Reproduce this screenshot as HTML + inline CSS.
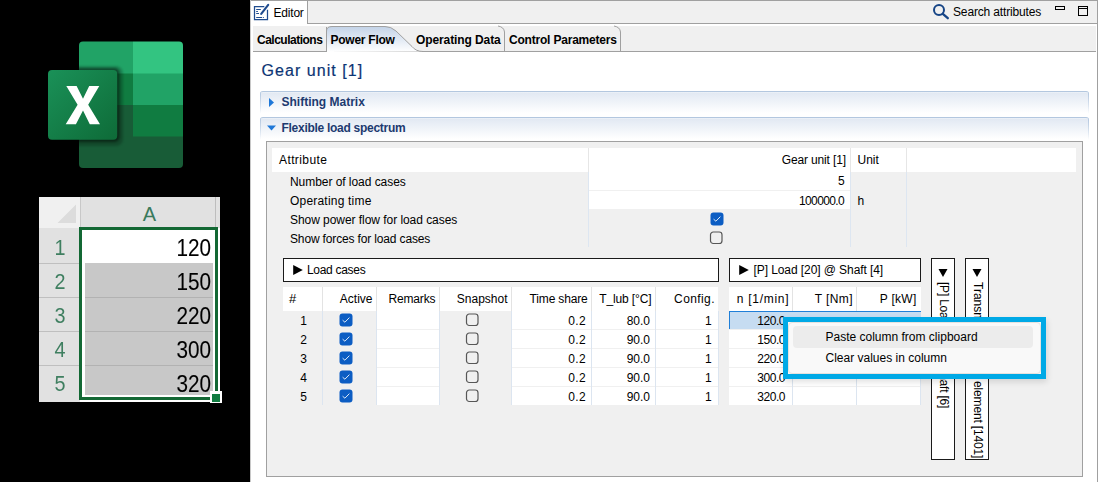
<!DOCTYPE html>
<html><head><meta charset="utf-8"><style>
html,body{margin:0;padding:0;background:#000;width:1099px;height:482px;overflow:hidden;position:relative;font-family:"Liberation Sans", sans-serif;}
div{position:absolute;}
.t{white-space:nowrap;}
</style></head><body>
<svg style="position:absolute;left:0;top:0" width="250" height="482" viewBox="0 0 250 482">
<defs>
<clipPath id="sheet"><rect x="79" y="41.5" width="104" height="126.5" rx="4"/></clipPath>
<linearGradient id="xg" x1="0" y1="0" x2="1" y2="1"><stop offset="0" stop-color="#1a9158"/><stop offset="1" stop-color="#0e6b38"/></linearGradient>
<filter id="sh1" x="-20%" y="-20%" width="150%" height="150%"><feGaussianBlur stdDeviation="0.9"/></filter><filter id="sh2" x="-20%" y="-20%" width="150%" height="150%"><feGaussianBlur stdDeviation="1"/></filter>
</defs>
<g clip-path="url(#sheet)">
<rect x="79" y="41" width="54" height="33" fill="#21a366"/>
<rect x="133" y="41" width="50" height="33" fill="#33c481"/>
<rect x="79" y="73.5" width="54" height="31.5" fill="#107c41"/>
<rect x="133" y="73.5" width="50" height="31.5" fill="#21a366"/>
<rect x="79" y="105" width="54" height="32" fill="#185c37"/>
<rect x="133" y="105" width="50" height="32" fill="#107c41"/>
<rect x="79" y="136.5" width="104" height="32" fill="#185c37"/>
<rect x="46" y="66" width="77" height="80" rx="7" fill="#000" opacity="0.2" filter="url(#sh2)"/>
<rect x="47" y="68" width="72.5" height="74" rx="5" fill="#000" opacity="0.42" filter="url(#sh1)"/>
</g>
<rect x="48" y="70" width="69.2" height="69.7" rx="4" fill="url(#xg)"/>
<path d="M66.3 86 L76.6 86 L83 98.8 L89.2 86 L99.3 86 L88.2 104.7 L100 124.2 L89.8 124.2 L83 110.6 L75.9 124.2 L65.7 124.2 L77.6 104.7 Z" fill="#fff"/>
</svg>
<div style="left:39px;top:197px;width:181px;height:205px;background:#fff"></div>
<div style="left:39px;top:197px;width:41px;height:31px;background:#f0f0f0"></div>
<svg style="position:absolute;left:56px;top:204px" width="20" height="20"><polygon points="20,0.5 20,19 1.5,19" fill="#dcdcdc"/></svg>
<div style="left:80px;top:197px;width:140px;height:31px;background:#e1e1e1"></div>
<div style="left:215px;top:197px;width:1px;height:31px;background:#bdbdbd"></div>
<div style="left:80px;top:197px;width:1px;height:31px;background:#c8c8c8"></div>
<div class="t" style="left:-50.5px;width:400px;text-align:center;top:202.67px;font-size:20px;line-height:22px;color:#3a7a5c;font-weight:normal;">A</div>
<div style="left:39px;top:228px;width:41px;height:174px;background:#e1e1e1"></div>
<div class="t" style="left:-140.2px;width:400px;text-align:center;top:235.98px;font-size:22px;line-height:24px;color:#3f7f60;font-weight:normal;transform:scaleX(0.9)">1</div>
<div style="left:39px;top:262.5px;width:41px;height:1px;background:#bfbfbf"></div>
<div class="t" style="left:-140.2px;width:400px;text-align:center;top:269.98px;font-size:22px;line-height:24px;color:#3f7f60;font-weight:normal;transform:scaleX(0.9)">2</div>
<div style="left:39px;top:296.5px;width:41px;height:1px;background:#bfbfbf"></div>
<div class="t" style="left:-140.2px;width:400px;text-align:center;top:303.98px;font-size:22px;line-height:24px;color:#3f7f60;font-weight:normal;transform:scaleX(0.9)">3</div>
<div style="left:39px;top:330.5px;width:41px;height:1px;background:#bfbfbf"></div>
<div class="t" style="left:-140.2px;width:400px;text-align:center;top:337.98px;font-size:22px;line-height:24px;color:#3f7f60;font-weight:normal;transform:scaleX(0.9)">4</div>
<div style="left:39px;top:364.5px;width:41px;height:1px;background:#bfbfbf"></div>
<div class="t" style="left:-140.2px;width:400px;text-align:center;top:371.98px;font-size:22px;line-height:24px;color:#3f7f60;font-weight:normal;transform:scaleX(0.9)">5</div>
<div style="left:85px;top:263px;width:127.5px;height:131.5px;background:#c8c8c8"></div>
<div style="left:85px;top:296.5px;width:127.5px;height:1px;background:#b2b2b2"></div>
<div style="left:85px;top:330.5px;width:127.5px;height:1px;background:#b2b2b2"></div>
<div style="left:85px;top:364.5px;width:127.5px;height:1px;background:#b2b2b2"></div>
<div class="t" style="left:-189.30px;width:400px;text-align:right;top:236.33px;font-size:23px;line-height:25px;color:#000;font-weight:normal;transform:scaleX(0.9);transform-origin:right center;-webkit-text-stroke:0.1px #000;">120</div>
<div class="t" style="left:-189.30px;width:400px;text-align:right;top:270.33px;font-size:23px;line-height:25px;color:#000;font-weight:normal;transform:scaleX(0.9);transform-origin:right center;-webkit-text-stroke:0.1px #000;">150</div>
<div class="t" style="left:-189.30px;width:400px;text-align:right;top:304.33px;font-size:23px;line-height:25px;color:#000;font-weight:normal;transform:scaleX(0.9);transform-origin:right center;-webkit-text-stroke:0.1px #000;">220</div>
<div class="t" style="left:-189.30px;width:400px;text-align:right;top:338.33px;font-size:23px;line-height:25px;color:#000;font-weight:normal;transform:scaleX(0.9);transform-origin:right center;-webkit-text-stroke:0.1px #000;">300</div>
<div class="t" style="left:-189.30px;width:400px;text-align:right;top:372.33px;font-size:23px;line-height:25px;color:#000;font-weight:normal;transform:scaleX(0.9);transform-origin:right center;-webkit-text-stroke:0.1px #000;">320</div>
<div style="left:79px;top:227px;width:133px;height:167px;border:3px solid #136834"></div>
<div style="left:210px;top:391px;width:12px;height:12px;background:#fff"></div>
<div style="left:212px;top:394px;width:8px;height:8px;background:#107c41"></div>
<div style="left:250px;top:0px;width:849px;height:482px;background:#fff"></div>
<div style="left:250px;top:0px;width:1px;height:482px;background:#c8c8c8"></div>
<div style="left:251px;top:0px;width:847px;height:23px;background:#f0f0f0;border-top:1px solid #a0a0a0;box-sizing:border-box"></div>
<div style="left:251px;top:23px;width:847px;height:1px;background:#a0a0a0"></div>
<div style="left:1097px;top:0px;width:1px;height:482px;background:#a0a0a0"></div>
<div style="left:251px;top:0px;width:56px;height:24px;background:#fff;border-top:1px solid #a0a0a0;box-sizing:border-box"></div>
<div style="left:307px;top:1px;width:1px;height:23px;background:#a0a0a0"></div>
<svg style="position:absolute;left:250px;top:0px" width="24" height="24" viewBox="0 0 24 24">
<path d="M14.3 6.5 H4.5 V19.5 H17.5 V9.8" fill="none" stroke="#1f4b8e" stroke-width="1.25"/>
<path d="M6.2 9.5 H10.8 M6.2 11.5 H7.9 M6.2 13.5 H9 M6.2 17.5 H12.2 M13.1 17.5 H13.9" stroke="#1f4b8e" stroke-width="1.05"/>
<path d="M18.2 4.8 L11.2 13.9" stroke="#1f4b8e" stroke-width="2.1" stroke-linecap="round"/>
</svg>
<div class="t" style="left:273.5px;top:5.84px;font-size:12px;line-height:14px;color:#000;font-weight:normal;letter-spacing:-0.2px;">Editor</div>
<svg style="position:absolute;left:928px;top:0px" width="24" height="24" viewBox="0 0 24 24"><circle cx="11" cy="10" r="5" fill="none" stroke="#174586" stroke-width="2"/><path d="M14.8 13.8 L19.8 18.2" stroke="#174586" stroke-width="2.3" stroke-linecap="round"/></svg>
<div class="t" style="left:953px;top:4.84px;font-size:12px;line-height:14px;color:#000;font-weight:normal;letter-spacing:-0.15px">Search attributes</div>
<div style="left:1055px;top:6px;width:10px;height:4px;border:1px solid #000;box-sizing:border-box"></div>
<div style="left:1078px;top:6px;width:10px;height:10px;border:1px solid #000;box-sizing:border-box;background:#f0f0f0"></div>
<div style="left:1079px;top:8px;width:8px;height:1px;background:#000"></div>
<div style="left:253px;top:26px;width:843px;height:25px;background:#f0f0f0"></div>
<div style="left:253px;top:51px;width:843px;height:1px;background:#a0a0a0"></div>
<div style="left:326px;top:27px;width:1px;height:24px;background:#a0a0a0"></div>
<div class="t" style="left:257px;top:32.54px;font-size:12px;line-height:14px;color:#000;font-weight:bold;letter-spacing:-0.5px">Calculations</div>
<svg style="position:absolute;left:326px;top:25px" width="100" height="28" viewBox="0 0 100 28">
<defs><linearGradient id="pf" x1="0" y1="0" x2="0" y2="1"><stop offset="0" stop-color="#c3d3e8"/><stop offset="1" stop-color="#ffffff"/></linearGradient></defs>
<path d="M0.5 27 V6 Q0.5 1.5 6 1.5 H59 Q65 1.5 70 6 L86 21.5 Q90 26.5 97 26.5 H100" fill="url(#pf)" stroke="#a0a0a0" stroke-width="1"/>
<rect x="1" y="26.9" width="95" height="1" fill="#fff"/>
</svg>
<div class="t" style="left:330.5px;top:32.54px;font-size:12px;line-height:14px;color:#000;font-weight:bold;letter-spacing:-0.25px">Power Flow</div>
<svg style="position:absolute;left:490px;top:25px" width="140" height="27" viewBox="0 0 140 27">
<path d="M8 1 Q14 2 14.5 7 V26" fill="none" stroke="#a0a0a0"/>
<path d="M124 1 Q130 2 130.5 7 V26" fill="none" stroke="#a0a0a0"/>
</svg>
<div class="t" style="left:416px;top:32.54px;font-size:12px;line-height:14px;color:#000;font-weight:bold;letter-spacing:-0.1px">Operating Data</div>
<div class="t" style="left:509px;top:32.54px;font-size:12px;line-height:14px;color:#000;font-weight:bold;letter-spacing:-0.2px">Control Parameters</div>
<div class="t" style="left:261.5px;top:62.46px;font-size:16px;line-height:18px;color:#0c3474;font-weight:normal;letter-spacing:1.05px;-webkit-text-stroke:0.2px #0c3474">Gear unit [1]</div>
<div style="left:260px;top:91px;width:829px;height:23px;box-sizing:border-box;border-top:1px solid #b3c7df;border-radius:3px 3px 0 0;background:linear-gradient(#b3c7df,rgba(179,199,223,0)) left top/1px 100% no-repeat,linear-gradient(#b3c7df,rgba(179,199,223,0)) right top/1px 100% no-repeat,linear-gradient(#f3f6fa 0px,#e2e9f3 1px,#ffffff 21px)"></div>
<svg style="position:absolute;left:266px;top:97px" width="10" height="12"><polygon points="3,1 8,5.5 3,10" fill="#1f78d8"/></svg>
<div class="t" style="left:281.5px;top:94.84px;font-size:12px;line-height:14px;color:#1d3a70;font-weight:bold;">Shifting Matrix</div>
<div style="left:260px;top:117px;width:829px;height:23px;box-sizing:border-box;border-top:1px solid #b3c7df;border-radius:3px 3px 0 0;background:linear-gradient(#b3c7df,rgba(179,199,223,0)) left top/1px 100% no-repeat,linear-gradient(#b3c7df,rgba(179,199,223,0)) right top/1px 100% no-repeat,linear-gradient(#f3f6fa 0px,#e2e9f3 1px,#ffffff 21px)"></div>
<svg style="position:absolute;left:266px;top:124px" width="11" height="8"><polygon points="1,1.5 10,1.5 5.5,6.5" fill="#1f78d8"/></svg>
<div class="t" style="left:281.5px;top:120.84px;font-size:12px;line-height:14px;color:#1d3a70;font-weight:bold;letter-spacing:-0.28px">Flexible load spectrum</div>
<div style="left:266px;top:141px;width:817px;height:336px;background:#f0f0f0;border:1px solid #a0a0a0;box-sizing:border-box"></div>
<div style="left:272px;top:148px;width:804px;height:24px;background:#fff"></div>
<div style="left:588px;top:148px;width:1px;height:24px;background:#e6e6e6"></div>
<div style="left:850px;top:148px;width:1px;height:24px;background:#e6e6e6"></div>
<div style="left:906px;top:148px;width:1px;height:24px;background:#e6e6e6"></div>
<div class="t" style="left:279px;top:153.14px;font-size:12px;line-height:14px;color:#000;font-weight:normal;letter-spacing:0.4px;">Attribute</div>
<div class="t" style="left:445.85px;width:400px;text-align:right;top:152.54px;font-size:12px;line-height:14px;color:#000;font-weight:normal;letter-spacing:-0.15px;">Gear unit [1]</div>
<div class="t" style="left:857.5px;top:152.54px;font-size:12px;line-height:14px;color:#000;font-weight:normal;">Unit</div>
<div style="left:589px;top:172px;width:261px;height:18px;background:#fff"></div>
<div style="left:589px;top:191px;width:261px;height:18px;background:#fff"></div>
<div style="left:588px;top:172px;width:1px;height:75px;background:#dde6f1"></div>
<div style="left:850px;top:172px;width:1px;height:75px;background:#dde6f1"></div>
<div style="left:906px;top:172px;width:1px;height:75px;background:#dde6f1"></div>
<div class="t" style="left:290px;top:175.14px;font-size:12px;line-height:14px;color:#000;font-weight:normal;letter-spacing:-0.05px;">Number of load cases</div>
<div class="t" style="left:290px;top:194.24px;font-size:12px;line-height:14px;color:#000;font-weight:normal;letter-spacing:0.2px;">Operating time</div>
<div class="t" style="left:290px;top:213.34px;font-size:12px;line-height:14px;color:#000;font-weight:normal;letter-spacing:-0.05px;">Show power flow for load cases</div>
<div class="t" style="left:290px;top:232.44px;font-size:12px;line-height:14px;color:#000;font-weight:normal;letter-spacing:-0.15px;">Show forces for load cases</div>
<div class="t" style="left:444.80px;width:400px;text-align:right;top:174.44px;font-size:12px;line-height:14px;color:#000;font-weight:normal;">5</div>
<div class="t" style="left:444.20px;width:400px;text-align:right;top:193.64px;font-size:12px;line-height:14px;color:#000;font-weight:normal;letter-spacing:-0.6px;">100000.0</div>
<div class="t" style="left:857.5px;top:193.64px;font-size:12px;line-height:14px;color:#000;font-weight:normal;">h</div>
<svg style="position:absolute;left:709.6px;top:211.5px" width="14" height="14" viewBox="0 0 14 14"><rect x="0.5" y="0.5" width="13" height="13" rx="3" fill="#0c5dc3"/><path d="M3.6 7.2 L5.9 9.2 L10.4 4.6" fill="none" stroke="#e8f0fa" stroke-width="0.95"/></svg>
<svg style="position:absolute;left:709.4px;top:230.7px" width="14" height="14" viewBox="0 0 14 14"><rect x="1.5" y="1" width="11.5" height="11.5" rx="2.8" fill="none" stroke="#575757" stroke-width="1.2"/></svg>
<div style="left:282.5px;top:258px;width:436.5px;height:24px;box-sizing:border-box;border:1px solid #1a1a1a;background:#fff"></div>
<svg style="position:absolute;left:292.5px;top:265px" width="11" height="11"><polygon points="0.2,0 9.8,5 0.2,10" fill="#000"/></svg>
<div class="t" style="left:307.0px;top:262.84px;font-size:12px;line-height:14px;color:#000;font-weight:normal;letter-spacing:-0.3px">Load cases</div>
<div style="left:729px;top:258px;width:192px;height:24px;box-sizing:border-box;border:1px solid #1a1a1a;background:#fff"></div>
<svg style="position:absolute;left:739px;top:265px" width="11" height="11"><polygon points="0.2,0 9.8,5 0.2,10" fill="#000"/></svg>
<div class="t" style="left:753.5px;top:262.84px;font-size:12px;line-height:14px;color:#000;font-weight:normal;letter-spacing:-0.08px">[P] Load [20] @ Shaft [4]</div>
<div style="left:282.5px;top:287px;width:435.5px;height:24px;background:#fff"></div>
<div style="left:322px;top:287px;width:1px;height:24px;background:#e3e3e3"></div>
<div style="left:376px;top:287px;width:1px;height:24px;background:#e3e3e3"></div>
<div style="left:439px;top:287px;width:1px;height:24px;background:#e3e3e3"></div>
<div style="left:511px;top:287px;width:1px;height:24px;background:#e3e3e3"></div>
<div style="left:591px;top:287px;width:1px;height:24px;background:#e3e3e3"></div>
<div style="left:655px;top:287px;width:1px;height:24px;background:#e3e3e3"></div>
<div style="left:729px;top:287px;width:192px;height:24px;background:#fff"></div>
<div style="left:792px;top:287px;width:1px;height:24px;background:#e3e3e3"></div>
<div style="left:856px;top:287px;width:1px;height:24px;background:#e3e3e3"></div>
<div class="t" style="left:289px;top:291.40px;font-size:13px;line-height:15px;color:#000;font-weight:normal;">#</div>
<div class="t" style="left:-27.50px;width:400px;text-align:right;top:292.24px;font-size:12px;line-height:14px;color:#000;font-weight:normal;">Active</div>
<div class="t" style="left:35.35px;width:400px;text-align:right;top:292.24px;font-size:12px;line-height:14px;color:#000;font-weight:normal;letter-spacing:-0.15px;">Remarks</div>
<div class="t" style="left:107.50px;width:400px;text-align:right;top:292.24px;font-size:12px;line-height:14px;color:#000;font-weight:normal;">Snapshot</div>
<div class="t" style="left:187.65px;width:400px;text-align:right;top:292.24px;font-size:12px;line-height:14px;color:#000;font-weight:normal;letter-spacing:-0.15px;">Time share</div>
<div class="t" style="left:251.35px;width:400px;text-align:right;top:292.24px;font-size:12px;line-height:14px;color:#000;font-weight:normal;letter-spacing:-0.15px;">T_lub [°C]</div>
<div class="t" style="left:314.90px;width:400px;text-align:right;top:292.24px;font-size:12px;line-height:14px;color:#000;font-weight:normal;letter-spacing:0.4px;">Config.</div>
<div class="t" style="left:389.20px;width:400px;text-align:right;top:292.24px;font-size:12px;line-height:14px;color:#000;font-weight:normal;letter-spacing:0.7px;">n [1/min]</div>
<div class="t" style="left:452.90px;width:400px;text-align:right;top:292.24px;font-size:12px;line-height:14px;color:#000;font-weight:normal;letter-spacing:0.4px;">T [Nm]</div>
<div class="t" style="left:516.60px;width:400px;text-align:right;top:292.24px;font-size:12px;line-height:14px;color:#000;font-weight:normal;letter-spacing:0.3px;">P [kW]</div>
<div style="left:377px;top:311px;width:62px;height:18px;background:#fff"></div>
<div style="left:512px;top:311px;width:79px;height:18px;background:#fff"></div>
<div style="left:592px;top:311px;width:63px;height:18px;background:#fff"></div>
<div style="left:656px;top:311px;width:62px;height:18px;background:#fff"></div>
<div style="left:729px;top:311px;width:63px;height:18px;background:#fff"></div>
<div style="left:793px;top:311px;width:63px;height:18px;background:#fff"></div>
<div style="left:857px;top:311px;width:63px;height:18px;background:#fff"></div>
<div style="left:377px;top:330px;width:62px;height:18px;background:#fff"></div>
<div style="left:512px;top:330px;width:79px;height:18px;background:#fff"></div>
<div style="left:592px;top:330px;width:63px;height:18px;background:#fff"></div>
<div style="left:656px;top:330px;width:62px;height:18px;background:#fff"></div>
<div style="left:729px;top:330px;width:63px;height:18px;background:#fff"></div>
<div style="left:793px;top:330px;width:63px;height:18px;background:#fff"></div>
<div style="left:857px;top:330px;width:63px;height:18px;background:#fff"></div>
<div style="left:377px;top:349px;width:62px;height:18px;background:#fff"></div>
<div style="left:512px;top:349px;width:79px;height:18px;background:#fff"></div>
<div style="left:592px;top:349px;width:63px;height:18px;background:#fff"></div>
<div style="left:656px;top:349px;width:62px;height:18px;background:#fff"></div>
<div style="left:729px;top:349px;width:63px;height:18px;background:#fff"></div>
<div style="left:793px;top:349px;width:63px;height:18px;background:#fff"></div>
<div style="left:857px;top:349px;width:63px;height:18px;background:#fff"></div>
<div style="left:377px;top:368px;width:62px;height:18px;background:#fff"></div>
<div style="left:512px;top:368px;width:79px;height:18px;background:#fff"></div>
<div style="left:592px;top:368px;width:63px;height:18px;background:#fff"></div>
<div style="left:656px;top:368px;width:62px;height:18px;background:#fff"></div>
<div style="left:729px;top:368px;width:63px;height:18px;background:#fff"></div>
<div style="left:793px;top:368px;width:63px;height:18px;background:#fff"></div>
<div style="left:857px;top:368px;width:63px;height:18px;background:#fff"></div>
<div style="left:377px;top:387px;width:62px;height:18px;background:#fff"></div>
<div style="left:512px;top:387px;width:79px;height:18px;background:#fff"></div>
<div style="left:592px;top:387px;width:63px;height:18px;background:#fff"></div>
<div style="left:656px;top:387px;width:62px;height:18px;background:#fff"></div>
<div style="left:729px;top:387px;width:63px;height:18px;background:#fff"></div>
<div style="left:793px;top:387px;width:63px;height:18px;background:#fff"></div>
<div style="left:857px;top:387px;width:63px;height:18px;background:#fff"></div>
<div style="left:322px;top:311px;width:1px;height:94px;background:#dce5f0"></div>
<div style="left:376px;top:311px;width:1px;height:94px;background:#dce5f0"></div>
<div style="left:439px;top:311px;width:1px;height:94px;background:#dce5f0"></div>
<div style="left:511px;top:311px;width:1px;height:94px;background:#dce5f0"></div>
<div style="left:591px;top:311px;width:1px;height:94px;background:#dce5f0"></div>
<div style="left:655px;top:311px;width:1px;height:94px;background:#dce5f0"></div>
<div style="left:718px;top:311px;width:1px;height:94px;background:#dce5f0"></div>
<div style="left:792px;top:311px;width:1px;height:94px;background:#dce5f0"></div>
<div style="left:856px;top:311px;width:1px;height:94px;background:#dce5f0"></div>
<div style="left:920px;top:311px;width:1px;height:94px;background:#dce5f0"></div>
<div style="left:729px;top:311px;width:192px;height:18px;background:#c6dcf1;border:1px solid #1f7fd8;border-right:none;border-bottom:none;box-sizing:border-box"></div>
<div class="t" style="left:-93.20px;width:400px;text-align:right;top:313.84px;font-size:12px;line-height:14px;color:#000;font-weight:normal;">1</div>
<svg style="position:absolute;left:339px;top:312.6px" width="14" height="14" viewBox="0 0 14 14"><rect x="0.5" y="0.5" width="13" height="13" rx="3" fill="#0c5dc3"/><path d="M3.6 7.2 L5.9 9.2 L10.4 4.6" fill="none" stroke="#e8f0fa" stroke-width="0.95"/></svg>
<svg style="position:absolute;left:465.2px;top:312.6px" width="14" height="14" viewBox="0 0 14 14"><rect x="1.5" y="1" width="11.5" height="11.5" rx="2.8" fill="none" stroke="#575757" stroke-width="1.2"/></svg>
<div class="t" style="left:185.90px;width:400px;text-align:right;top:313.84px;font-size:12px;line-height:14px;color:#000;font-weight:normal;letter-spacing:0.3px;">0.2</div>
<div class="t" style="left:250.00px;width:400px;text-align:right;top:313.84px;font-size:12px;line-height:14px;color:#000;font-weight:normal;">80.0</div>
<div class="t" style="left:311.80px;width:400px;text-align:right;top:313.84px;font-size:12px;line-height:14px;color:#000;font-weight:normal;">1</div>
<div class="t" style="left:385.05px;width:400px;text-align:right;top:313.84px;font-size:12px;line-height:14px;color:#000;font-weight:normal;letter-spacing:-0.45px;">120.0</div>
<div class="t" style="left:-93.20px;width:400px;text-align:right;top:332.84px;font-size:12px;line-height:14px;color:#000;font-weight:normal;">2</div>
<svg style="position:absolute;left:339px;top:331.6px" width="14" height="14" viewBox="0 0 14 14"><rect x="0.5" y="0.5" width="13" height="13" rx="3" fill="#0c5dc3"/><path d="M3.6 7.2 L5.9 9.2 L10.4 4.6" fill="none" stroke="#e8f0fa" stroke-width="0.95"/></svg>
<svg style="position:absolute;left:465.2px;top:331.6px" width="14" height="14" viewBox="0 0 14 14"><rect x="1.5" y="1" width="11.5" height="11.5" rx="2.8" fill="none" stroke="#575757" stroke-width="1.2"/></svg>
<div class="t" style="left:185.90px;width:400px;text-align:right;top:332.84px;font-size:12px;line-height:14px;color:#000;font-weight:normal;letter-spacing:0.3px;">0.2</div>
<div class="t" style="left:250.00px;width:400px;text-align:right;top:332.84px;font-size:12px;line-height:14px;color:#000;font-weight:normal;">90.0</div>
<div class="t" style="left:311.80px;width:400px;text-align:right;top:332.84px;font-size:12px;line-height:14px;color:#000;font-weight:normal;">1</div>
<div class="t" style="left:385.05px;width:400px;text-align:right;top:332.84px;font-size:12px;line-height:14px;color:#000;font-weight:normal;letter-spacing:-0.45px;">150.0</div>
<div class="t" style="left:-93.20px;width:400px;text-align:right;top:351.84px;font-size:12px;line-height:14px;color:#000;font-weight:normal;">3</div>
<svg style="position:absolute;left:339px;top:350.6px" width="14" height="14" viewBox="0 0 14 14"><rect x="0.5" y="0.5" width="13" height="13" rx="3" fill="#0c5dc3"/><path d="M3.6 7.2 L5.9 9.2 L10.4 4.6" fill="none" stroke="#e8f0fa" stroke-width="0.95"/></svg>
<svg style="position:absolute;left:465.2px;top:350.6px" width="14" height="14" viewBox="0 0 14 14"><rect x="1.5" y="1" width="11.5" height="11.5" rx="2.8" fill="none" stroke="#575757" stroke-width="1.2"/></svg>
<div class="t" style="left:185.90px;width:400px;text-align:right;top:351.84px;font-size:12px;line-height:14px;color:#000;font-weight:normal;letter-spacing:0.3px;">0.2</div>
<div class="t" style="left:250.00px;width:400px;text-align:right;top:351.84px;font-size:12px;line-height:14px;color:#000;font-weight:normal;">90.0</div>
<div class="t" style="left:311.80px;width:400px;text-align:right;top:351.84px;font-size:12px;line-height:14px;color:#000;font-weight:normal;">1</div>
<div class="t" style="left:385.05px;width:400px;text-align:right;top:351.84px;font-size:12px;line-height:14px;color:#000;font-weight:normal;letter-spacing:-0.45px;">220.0</div>
<div class="t" style="left:-93.20px;width:400px;text-align:right;top:370.84px;font-size:12px;line-height:14px;color:#000;font-weight:normal;">4</div>
<svg style="position:absolute;left:339px;top:369.6px" width="14" height="14" viewBox="0 0 14 14"><rect x="0.5" y="0.5" width="13" height="13" rx="3" fill="#0c5dc3"/><path d="M3.6 7.2 L5.9 9.2 L10.4 4.6" fill="none" stroke="#e8f0fa" stroke-width="0.95"/></svg>
<svg style="position:absolute;left:465.2px;top:369.6px" width="14" height="14" viewBox="0 0 14 14"><rect x="1.5" y="1" width="11.5" height="11.5" rx="2.8" fill="none" stroke="#575757" stroke-width="1.2"/></svg>
<div class="t" style="left:185.90px;width:400px;text-align:right;top:370.84px;font-size:12px;line-height:14px;color:#000;font-weight:normal;letter-spacing:0.3px;">0.2</div>
<div class="t" style="left:250.00px;width:400px;text-align:right;top:370.84px;font-size:12px;line-height:14px;color:#000;font-weight:normal;">90.0</div>
<div class="t" style="left:311.80px;width:400px;text-align:right;top:370.84px;font-size:12px;line-height:14px;color:#000;font-weight:normal;">1</div>
<div class="t" style="left:385.05px;width:400px;text-align:right;top:370.84px;font-size:12px;line-height:14px;color:#000;font-weight:normal;letter-spacing:-0.45px;">300.0</div>
<div class="t" style="left:-93.20px;width:400px;text-align:right;top:389.84px;font-size:12px;line-height:14px;color:#000;font-weight:normal;">5</div>
<svg style="position:absolute;left:339px;top:388.6px" width="14" height="14" viewBox="0 0 14 14"><rect x="0.5" y="0.5" width="13" height="13" rx="3" fill="#0c5dc3"/><path d="M3.6 7.2 L5.9 9.2 L10.4 4.6" fill="none" stroke="#e8f0fa" stroke-width="0.95"/></svg>
<svg style="position:absolute;left:465.2px;top:388.6px" width="14" height="14" viewBox="0 0 14 14"><rect x="1.5" y="1" width="11.5" height="11.5" rx="2.8" fill="none" stroke="#575757" stroke-width="1.2"/></svg>
<div class="t" style="left:185.90px;width:400px;text-align:right;top:389.84px;font-size:12px;line-height:14px;color:#000;font-weight:normal;letter-spacing:0.3px;">0.2</div>
<div class="t" style="left:250.00px;width:400px;text-align:right;top:389.84px;font-size:12px;line-height:14px;color:#000;font-weight:normal;">90.0</div>
<div class="t" style="left:311.80px;width:400px;text-align:right;top:389.84px;font-size:12px;line-height:14px;color:#000;font-weight:normal;">1</div>
<div class="t" style="left:385.05px;width:400px;text-align:right;top:389.84px;font-size:12px;line-height:14px;color:#000;font-weight:normal;letter-spacing:-0.45px;">320.0</div>
<div style="left:931px;top:258px;width:24px;height:202px;box-sizing:border-box;border:1px solid #1a1a1a;background:#fff"></div>
<svg style="position:absolute;left:937px;top:268px" width="12" height="10"><polygon points="1.5,1 10.5,1 6,9" fill="#000"/></svg>
<div class="t" style="left:936.5px;top:282px;font-size:12px;line-height:14px;writing-mode:vertical-rl;letter-spacing:-0.22px">[P] Load [20] @ Shaft [6]</div>
<div style="left:965px;top:258px;width:24px;height:202px;box-sizing:border-box;border:1px solid #1a1a1a;background:#fff"></div>
<svg style="position:absolute;left:971px;top:268px" width="12" height="10"><polygon points="1.5,1 10.5,1 6,9" fill="#000"/></svg>
<div class="t" style="left:970.5px;top:282px;font-size:12px;line-height:14px;writing-mode:vertical-rl;">Transmission</div>
<div class="t" style="left:970.5px;top:378px;width:14px;height:80px;font-size:12px;line-height:14px;writing-mode:vertical-rl;text-align:right;"><span style="letter-spacing:-0.15px">element [1401]</span></div>
<div style="left:783px;top:317px;width:263px;height:62px;box-sizing:border-box;border:5px solid #00a9e6;background:#f9f9f9;box-shadow:1px 3px 6px rgba(0,0,0,0.12)"></div>
<div style="left:788px;top:322px;width:253px;height:52px;box-sizing:border-box;border:1px solid #e6e2de;border-radius:4px;background:#f9f9f9"></div>
<div style="left:793px;top:325.5px;width:240px;height:22px;background:#ececec;border-radius:4px"></div>
<div class="t" style="left:825.5px;top:329.74px;font-size:12px;line-height:14px;color:#000;font-weight:normal;">Paste column from clipboard</div>
<div class="t" style="left:825.5px;top:351.34px;font-size:12px;line-height:14px;color:#000;font-weight:normal;">Clear values in column</div>
</body></html>
